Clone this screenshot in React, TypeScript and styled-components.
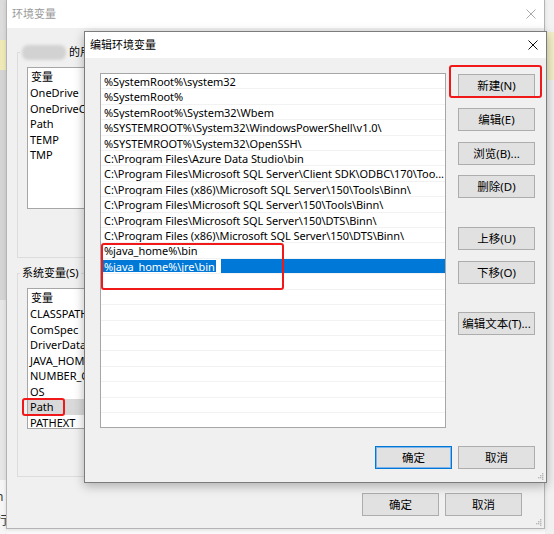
import React from "react";
import styled, { createGlobalStyle } from "styled-components";

const UI_FONT = `"Noto Sans", "Noto Sans CJK SC", sans-serif`;

const GlobalStyle = createGlobalStyle`
  html, body { margin: 0; padding: 0; background: #ffffff; }
  body { font-family: ${UI_FONT}; -webkit-font-smoothing: antialiased; }
  * { box-sizing: border-box; }
`;

const Desktop = styled.div`
  position: relative;
  width: 554px;
  height: 534px;
  overflow: hidden;
  background: #fafafa;
  font-family: ${UI_FONT};
  font-size: 11px;
  color: #000;
`;

const BackEdge = styled.div<{ $side: "left" | "right" }>`
  position: absolute;
  top: 0;
  bottom: 0;
  ${(p) => (p.$side === "left" ? "left: 0; width: 7px;" : "right: 0; width: 9px;")}
  background: ${(p) =>
    p.$side === "left"
      ? "linear-gradient(#dcdcdc 0 40px, #efe9b8 40px 70px, #d4d4d4 70px 300px, #e6e6e6 300px 480px, #f6f6f6 480px)"
      : "linear-gradient(#f2f2f2 0 32px, #f3f0c8 32px 80px, #f1f1f1 80px)"};
`;

const BackText = styled.span<{ $top: number }>`
  position: absolute;
  left: -4px;
  top: ${(p) => p.$top}px;
  font-size: 12px;
  line-height: 14px;
  color: #333;
`;

const Window = styled.section<{ $active?: boolean }>`
  position: absolute;
  display: flex;
  flex-direction: column;
  background: #f0f0f0;
  border: 1px solid ${(p) => (p.$active ? "#7c7c7c" : "#b4b4b4")};
  box-shadow: ${(p) =>
    p.$active ? "0 3px 10px rgba(0,0,0,0.28)" : "0 1px 4px rgba(0,0,0,0.12)"};
`;

const OuterWindow = styled(Window)`
  left: 6px;
  top: -1px;
  width: 539px;
  height: 530px;
`;

const InnerWindow = styled(Window)`
  left: 84px;
  top: 31px;
  width: 463px;
  height: 452px;
`;

const TitleBar = styled.header<{ $active?: boolean; $h: number }>`
  display: flex;
  align-items: center;
  justify-content: space-between;
  height: ${(p) => p.$h}px;
  flex: none;
  background: #ffffff;
  padding-left: 5px;
  color: ${(p) => (p.$active ? "#000" : "#9a9a9a")};
  font-size: 11px;
`;

const TitleText = styled.span`
  line-height: 14px;
`;

const CloseBtn = styled.span<{ $active?: boolean }>`
  width: 26px;
  height: 100%;
  display: flex;
  align-items: center;
  justify-content: center;
  color: ${(p) => (p.$active ? "#111" : "#a8a8a8")};
`;

const CloseIcon = () => (
  <svg width="10" height="10" viewBox="0 0 10 10">
    <path d="M0.5 0.5 L9.5 9.5 M9.5 0.5 L0.5 9.5" stroke="currentColor" strokeWidth="1" fill="none" />
  </svg>
);

/* ---------- outer dialog ---------- */

const OuterBody = styled.div`
  flex: 1;
  display: flex;
  flex-direction: column;
  padding: 16px 0 0 10px;
`;

const Group = styled.fieldset<{ $h: number }>`
  margin: 0 0 7px 0;
  width: 514px;
  height: ${(p) => p.$h}px;
  border: 1px solid #dcdcdc;
  padding: 7px 9px 0 9px;
  min-width: 0;
`;

const Caption = styled.legend`
  display: flex;
  align-items: center;
  padding: 0 2px;
  margin-left: -7px;
  height: 16px;
  line-height: 16px;
  font-size: 11px;
  color: #000;
`;

const BlurredName = styled.span`
  display: inline-block;
  width: 44px;
  height: 15px;
  margin-right: 3px;
  border-radius: 6px;
  background: #d2d2d2;
  filter: blur(1.8px);
`;

const VarList = styled.div<{ $h: number }>`
  width: 490px;
  height: ${(p) => p.$h}px;
  overflow: hidden;
  background: #fff;
  border: 1px solid #a6a6a6;
`;

const VarHeader = styled.div`
  height: 17px;
  line-height: 17px;
  padding-left: 3px;
  font-size: 11px;
`;

const VarRow = styled.div<{ $selected?: boolean }>`
  width: 160px;
  height: 15.5px;
  line-height: 15.5px;
  padding-left: 2px;
  white-space: nowrap;
  overflow: hidden;
  background: ${(p) => (p.$selected ? "#d9d9d9" : "transparent")};
`;

const Footer = styled.div<{ $pad: string }>`
  display: flex;
  justify-content: flex-end;
  gap: 6px;
  padding: ${(p) => p.$pad};
`;

const Button = styled.div<{ $default?: boolean; $gap?: number }>`
  flex: none;
  width: 77px;
  height: 23px;
  margin-top: ${(p) => p.$gap ?? 0}px;
  display: flex;
  align-items: center;
  justify-content: center;
  background: #e1e1e1;
  border: 1px solid ${(p) => (p.$default ? "#0078d7" : "#adadad")};
  box-shadow: ${(p) => (p.$default ? "inset 0 0 0 1px #7eb4ea" : "none")};
  font-size: 11.5px;
  line-height: 14px;
  white-space: nowrap;
`;

const Grip = styled.svg`
  position: absolute;
  right: 2px;
  bottom: 2px;
`;

const GripDots = () => (
  <Grip width="7" height="7" viewBox="0 0 7 7">
    {[
      [5, 0],
      [3, 2],
      [5, 2],
      [1, 4],
      [3, 4],
      [5, 4],
      [5, 5.9],
    ].map(([x, y], i) => (
      <rect key={i} x={x} y={y} width="1.4" height="1.4" fill="#b8b8b8" />
    ))}
  </Grip>
);

/* ---------- inner dialog ---------- */

const InnerBody = styled.div`
  flex: 1;
  display: flex;
  flex-direction: column;
  padding: 15px 11px 0 15px;
`;

const InnerMain = styled.div`
  display: flex;
  gap: 12px;
`;

const PathList = styled.div`
  position: relative;
  width: 346px;
  height: 355px;
  overflow: hidden;
  background: #fff;
  border: 1px solid #a6a6a6;
`;

const PathRow = styled.div<{ $selected?: boolean }>`
  height: 15.42px;
  line-height: 15px;
  padding-left: 3px;
  letter-spacing: -0.06px;
  white-space: nowrap;
  overflow: hidden;
  border-bottom: 1px solid #f2f2f2;
  background: ${(p) => (p.$selected ? "#0078d7" : "transparent")};
`;

const EditBox = styled.span`
  display: inline-flex;
  align-items: stretch;
  height: 100%;
  margin-left: -2px;
  padding: 1px 5px 1px 1px;
  background: #ffffff;
`;

const EditSelection = styled.span`
  display: inline-block;
  background: #0078d7;
  color: #ffffff;
  line-height: 13px;
  padding: 0 1px;
`;

const ButtonColumn = styled.div`
  display: flex;
  flex-direction: column;
  padding-top: 1px;
`;

const Mark = styled.div<{ $l: number; $t: number; $w: number; $h: number }>`
  position: absolute;
  left: ${(p) => p.$l}px;
  top: ${(p) => p.$t}px;
  width: ${(p) => p.$w}px;
  height: ${(p) => p.$h}px;
  border: 2px solid #f01818;
  border-radius: 3px;
  pointer-events: none;
`;

const userVars = ["OneDrive", "OneDriveConsumer", "Path", "TEMP", "TMP"];
const sysVars = [
  "CLASSPATH",
  "ComSpec",
  "DriverData",
  "JAVA_HOME",
  "NUMBER_OF_PROCESSORS",
  "OS",
  "Path",
  "PATHEXT",
];

const paths = [
  "%SystemRoot%\\system32",
  "%SystemRoot%",
  "%SystemRoot%\\System32\\Wbem",
  "%SYSTEMROOT%\\System32\\WindowsPowerShell\\v1.0\\",
  "%SYSTEMROOT%\\System32\\OpenSSH\\",
  "C:\\Program Files\\Azure Data Studio\\bin",
  "C:\\Program Files\\Microsoft SQL Server\\Client SDK\\ODBC\\170\\Too...",
  "C:\\Program Files (x86)\\Microsoft SQL Server\\150\\Tools\\Binn\\",
  "C:\\Program Files\\Microsoft SQL Server\\150\\Tools\\Binn\\",
  "C:\\Program Files\\Microsoft SQL Server\\150\\DTS\\Binn\\",
  "C:\\Program Files (x86)\\Microsoft SQL Server\\150\\DTS\\Binn\\",
  "%java_home%\\bin",
];
const editing = "%java_home%\\jre\\bin";

const sideButtons: { label: string; gap: number }[] = [
  { label: "新建(N)", gap: 0 },
  { label: "编辑(E)", gap: 11 },
  { label: "浏览(B)...", gap: 11 },
  { label: "删除(D)", gap: 10 },
  { label: "上移(U)", gap: 29 },
  { label: "下移(O)", gap: 11 },
  { label: "编辑文本(T)...", gap: 28 },
];

export default function App() {
  return (
    <Desktop>
      <GlobalStyle />
      <BackEdge $side="left">
        <BackText $top={490}>n</BackText>
        <BackText $top={514}>行</BackText>
      </BackEdge>
      <BackEdge $side="right" />

      <OuterWindow>
        <TitleBar $h={28}>
          <TitleText>环境变量</TitleText>
          <CloseBtn>
            <CloseIcon />
          </CloseBtn>
        </TitleBar>
        <OuterBody>
          <Group $h={214}>
            <Caption>
              <BlurredName />
              的用户变量(U)
            </Caption>
            <VarList $h={142}>
              <VarHeader>变量</VarHeader>
              {userVars.map((v) => (
                <VarRow key={v}>{v}</VarRow>
              ))}
            </VarList>
          </Group>
          <Group $h={212}>
            <Caption>系统变量(S)</Caption>
            <VarList $h={141}>
              <VarHeader>变量</VarHeader>
              {sysVars.map((v) => (
                <VarRow key={v} $selected={v === "Path"}>
                  {v}
                </VarRow>
              ))}
            </VarList>
          </Group>
          <Footer $pad="9px 22px 0 0">
            <Button>确定</Button>
            <Button>取消</Button>
          </Footer>
        </OuterBody>
        <GripDots />
      </OuterWindow>

      <InnerWindow $active>
        <TitleBar $active $h={26}>
          <TitleText>编辑环境变量</TitleText>
          <CloseBtn $active>
            <CloseIcon />
          </CloseBtn>
        </TitleBar>
        <InnerBody>
          <InnerMain>
            <PathList>
              {paths.map((p) => (
                <PathRow key={p}>{p}</PathRow>
              ))}
              <PathRow $selected>
                <EditBox>
                  <EditSelection>{editing}</EditSelection>
                </EditBox>
              </PathRow>
              {Array.from({ length: 10 }).map((_, i) => (
                <PathRow key={`e${i}`} />
              ))}
            </PathList>
            <ButtonColumn>
              {sideButtons.map((b) => (
                <Button key={b.label} $gap={b.gap}>
                  {b.label}
                </Button>
              ))}
            </ButtonColumn>
          </InnerMain>
          <Footer $pad="18px 0 0 0">
            <Button $default>确定</Button>
            <Button>取消</Button>
          </Footer>
        </InnerBody>
        <GripDots />
      </InnerWindow>

      <Mark $l={449} $t={65} $w={93} $h={33} />
      <Mark $l={101} $t={243} $w={183} $h={47} />
      <Mark $l={22} $t={398} $w={43} $h={18} />
    </Desktop>
  );
}
